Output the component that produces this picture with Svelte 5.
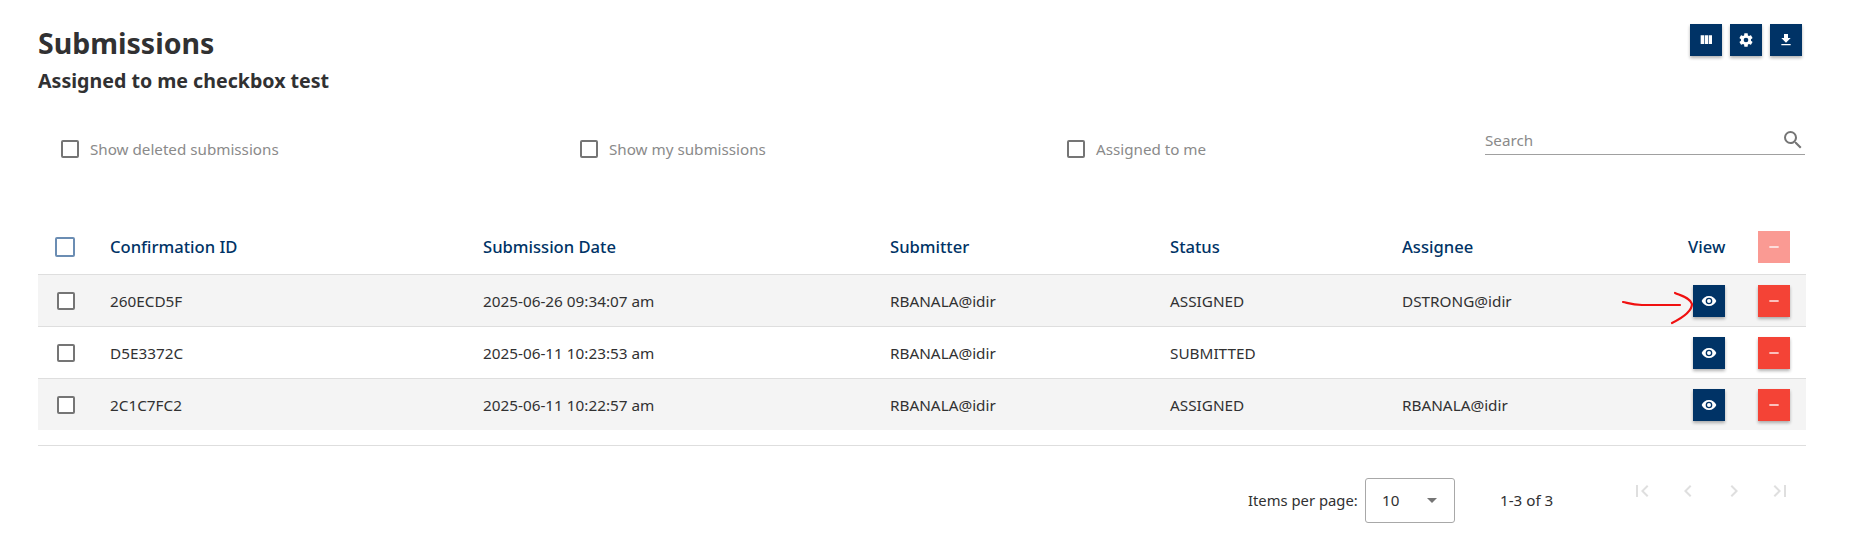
<script>
  const icons = {
    column: 'M10 18h5V5h-5v13zm-6 0h5V5H4v13zM16 5v13h5V5h-5z',
    cog: 'M12,15.5A3.5,3.5 0 0,1 8.5,12A3.5,3.5 0 0,1 12,8.5A3.5,3.5 0 0,1 15.5,12A3.5,3.5 0 0,1 12,15.5M19.43,12.97C19.47,12.65 19.5,12.33 19.5,12C19.5,11.67 19.47,11.34 19.43,11L21.54,9.37C21.73,9.22 21.78,8.95 21.66,8.73L19.66,5.27C19.54,5.05 19.27,4.96 19.05,5.05L16.56,6.05C16.04,5.66 15.5,5.32 14.87,5.07L14.5,2.42C14.46,2.18 14.25,2 14,2H10C9.75,2 9.54,2.18 9.5,2.42L9.13,5.07C8.5,5.32 7.96,5.66 7.44,6.05L4.95,5.05C4.73,4.96 4.46,5.05 4.34,5.27L2.34,8.73C2.21,8.95 2.27,9.22 2.46,9.37L4.57,11C4.53,11.34 4.5,11.67 4.5,12C4.5,12.33 4.53,12.65 4.57,12.97L2.46,14.63C2.27,14.78 2.21,15.05 2.34,15.27L4.34,18.73C4.46,18.95 4.73,19.03 4.95,18.95L7.44,17.94C7.96,18.34 8.5,18.68 9.13,18.93L9.5,21.58C9.54,21.82 9.75,22 10,22H14C14.25,22 14.46,21.82 14.5,21.58L14.87,18.93C15.5,18.67 16.04,18.34 16.56,17.94L19.05,18.95C19.27,19.03 19.54,18.95 19.66,18.73L21.66,15.27C21.78,15.05 21.73,14.78 21.54,14.63L19.43,12.97Z',
    download: 'M5,20H19V18H5M19,9H15V3H9V9H5L12,16L19,9Z',
    eye: 'M12,9A3,3 0 0,0 9,12A3,3 0 0,0 12,15A3,3 0 0,0 15,12A3,3 0 0,0 12,9M12,17A5,5 0 0,1 7,12A5,5 0 0,1 12,7A5,5 0 0,1 17,12A5,5 0 0,1 12,17M12,4.5C7,4.5 2.73,7.61 1,12C2.73,16.39 7,19.5 12,19.5C17,19.5 21.27,16.39 23,12C21.27,7.61 17,4.5 12,4.5Z',
    minus: 'M19,13H5V11H19V13Z',
    search: 'M9.5,3A6.5,6.5 0 0,1 16,9.5C16,11.11 15.41,12.59 14.44,13.73L14.71,14H15.5L20.5,19L19,20.5L14,15.5V14.71L13.73,14.44C12.59,15.41 11.11,16 9.5,16A6.5,6.5 0 0,1 3,9.5A6.5,6.5 0 0,1 9.5,3M9.5,5C7,5 5,7 5,9.5C5,12 7,14 9.5,14C12,14 14,12 14,9.5C14,7 12,5 9.5,5Z',
    first: 'M18.41,16.59L13.82,12L18.41,7.41L17,6L11,12L17,18L18.41,16.59M6,6H8V18H6V6Z',
    prev: 'M15.41,16.58L10.83,12L15.41,7.41L14,6L8,12L14,18L15.41,16.58Z',
    next: 'M8.59,16.58L13.17,12L8.59,7.41L10,6L16,12L10,18L8.59,16.58Z',
    last: 'M5.59,7.41L10.18,12L5.59,16.59L7,18L13,12L7,6L5.59,7.41M16,6H18V18H16V6Z'
  };
  const rows = [
    { id: '260ECD5F', date: '2025-06-26 09:34:07 am', by: 'RBANALA@idir', status: 'ASSIGNED', to: 'DSTRONG@idir' },
    { id: 'D5E3372C', date: '2025-06-11 10:23:53 am', by: 'RBANALA@idir', status: 'SUBMITTED', to: '' },
    { id: '2C1C7FC2', date: '2025-06-11 10:22:57 am', by: 'RBANALA@idir', status: 'ASSIGNED', to: 'RBANALA@idir' }
  ];
  const filters = ['Show deleted submissions', 'Show my submissions', 'Assigned to me'];
</script>

{#snippet icon(name, cls)}
  <svg class={cls} viewBox="0 0 24 24" aria-hidden="true"><path d={icons[name]} /></svg>
{/snippet}

<div class="page">
  <header class="head">
    <div>
      <h1>Submissions</h1>
      <h2>Assigned to me checkbox test</h2>
    </div>
    <div class="tools">
      <button class="btn navy">{@render icon('column', 'i16')}</button>
      <button class="btn navy">{@render icon('cog', 'i16')}</button>
      <button class="btn navy">{@render icon('download', 'i16')}</button>
    </div>
  </header>

  <section class="filters">
    {#each filters as f, i}
      <label class="filter f{i}"><span class="box"></span><span>{f}</span></label>
    {/each}
    <div class="search">
      <span>Search</span>
      {@render icon('search', 'i24')}
    </div>
  </section>

  <section class="table">
    <div class="row headrow">
      <div class="cb"><span class="box blue"></span></div>
      <div>Confirmation ID</div>
      <div>Submission Date</div>
      <div>Submitter</div>
      <div>Status</div>
      <div>Assignee</div>
      <div class="viewhead">View</div>
      <div class="act"><button class="btn faded">{@render icon('minus', 'i16')}</button></div>
    </div>
    {#each rows as r, i}
      <div class="row body" class:alt={i !== 1}>
        <div class="cb"><span class="box"></span></div>
        <div>{r.id}</div>
        <div>{r.date}</div>
        <div>{r.by}</div>
        <div>{r.status}</div>
        <div>{r.to}</div>
        <div class="viewcell"><button class="btn navy">{@render icon('eye', 'i16')}</button></div>
        <div class="act"><button class="btn red">{@render icon('minus', 'i16')}</button></div>
        {#if i === 0}
          <svg class="scribble" viewBox="0 0 72 42" aria-hidden="true">
            <path d="M1 15 C6 16 10 18 20 18 L58 18 M53 6 C60 9 68 11 70 17 C70 24 62 30 50 36" />
          </svg>
        {/if}
      </div>
    {/each}
  </section>

  <footer class="pager">
    <span class="ipp">Items per page:</span>
    <div class="select"><span>10</span><i class="caret"></i></div>
    <span class="count">1-3 of 3</span>
    <div class="navs">
      {@render icon('first', 'i24')}
      {@render icon('prev', 'i24')}
      {@render icon('next', 'i24')}
      {@render icon('last', 'i24')}
    </div>
  </footer>
</div>

<style>
  :global(body) {
    margin: 0;
    background: #fff;
    font-family: "Noto Sans", "Open Sans", "Liberation Sans", sans-serif;
    color: #313132;
  }
  .page {
    width: 1768px;
    margin-left: 38px;
    height: 541px;
    display: flex;
    flex-direction: column;
  }
  .head {
    display: flex;
    justify-content: space-between;
    align-items: flex-start;
    padding-top: 24px;
    height: 90px;
    box-sizing: border-box;
  }
  h1 {
    margin: 0;
    font-size: 28.5px;
    line-height: 38px;
    font-weight: 700;
    color: #313132;
  }
  h2 {
    margin: 5px 0 0;
    font-size: 19.6px;
    line-height: 28px;
    font-weight: 700;
    color: #313132;
  }
  .tools {
    display: flex;
    gap: 8px;
    margin-right: 4px;
  }
  .btn {
    width: 32px;
    height: 32px;
    padding: 0;
    border: 0;
    display: flex;
    align-items: center;
    justify-content: center;
    box-shadow: 0 2px 3px rgba(0, 0, 0, 0.3);
  }
  .navy { background: #003366; }
  .red { background: #f44336; }
  .faded { background: #fa9a93; box-shadow: none; }
  .btn svg { fill: #fff; }
  .i16 { width: 16px; height: 16px; display: block; }
  .i24 { width: 24px; height: 24px; display: block; }
  .filters {
    display: flex;
    align-items: center;
    height: 60px;
    margin-top: 29px;
    font-size: 15.2px;
    color: #8a8a8a;
  }
  .filter { display: flex; align-items: center; gap: 11px; }
  .f0 { width: 519px; margin-left: 23px; }
  .f1 { width: 487px; }
  .f2 { width: 418px; }
  .box {
    width: 18px;
    height: 18px;
    box-sizing: border-box;
    border: 2px solid #757575;
    border-radius: 2px;
    display: block;
    background: #fff;
  }
  .box.blue {
    width: 20px;
    height: 20px;
    margin-left: -2px;
    border-color: #6b8db3;
  }
  .search {
    width: 320px;
    height: 26px;
    margin-top: -14px;
    box-sizing: border-box;
    border-bottom: 1px solid #a0a0a0;
    display: flex;
    justify-content: space-between;
    align-items: center;
    font-size: 15.2px;
    line-height: 20px;
    color: #8a8a8a;
  }
  .search span { margin-top: -3px; }
  .search svg { fill: #757575; margin-top: -4px; }
  .table {
    margin-top: 40px;
    border-bottom: 1px solid #dedede;
    padding-bottom: 15px;
  }
  .row {
    position: relative;
    display: grid;
    grid-template-columns: 72px 373px 407px 280px 232px 286px 70px 48px;
    align-items: center;
    font-size: 15.3px;
    color: #313132;
  }
  .headrow {
    height: 55px;
    color: #003366;
    font-weight: 500;
    font-size: 16.6px;
  }
  .body {
    height: 52px;
    border-top: 1px solid #dedede;
    box-sizing: border-box;
  }
  .alt { background: #f4f4f4; }
  .cb { padding-left: 19px; }
  .viewhead { white-space: nowrap; }
  .viewcell { display: flex; }
  .viewcell .btn { margin-left: 5px; }
  .act { display: flex; }
  .scribble {
    position: absolute;
    left: 1584px;
    top: 12px;
    width: 72px;
    height: 42px;
    overflow: visible;
    fill: none;
    stroke: #f01010;
    stroke-width: 2.2;
    stroke-linecap: round;
    stroke-linejoin: round;
  }
  .pager {
    display: flex;
    align-items: center;
    margin-top: 31px;
    height: 46px;
    font-size: 15.2px;
    color: #313132;
  }
  .ipp { margin-left: 1210px; width: 117px; white-space: nowrap; font-size: 14.8px; }
  .select {
    width: 90px;
    height: 45px;
    box-sizing: border-box;
    border: 1px solid #a8a8a8;
    border-radius: 3px;
    display: flex;
    align-items: center;
    justify-content: space-between;
    padding: 0 17px 0 16px;
  }
  .caret {
    width: 0;
    height: 0;
    border-left: 5px solid transparent;
    border-right: 5px solid transparent;
    border-top: 5px solid #757575;
  }
  .count { margin-left: 45px; width: 74px; white-space: nowrap; }
  .navs {
    display: flex;
    gap: 22px;
    margin-left: 56px;
    margin-top: -18px;
  }
  .navs svg { fill: #dfdfdf; }
</style>
